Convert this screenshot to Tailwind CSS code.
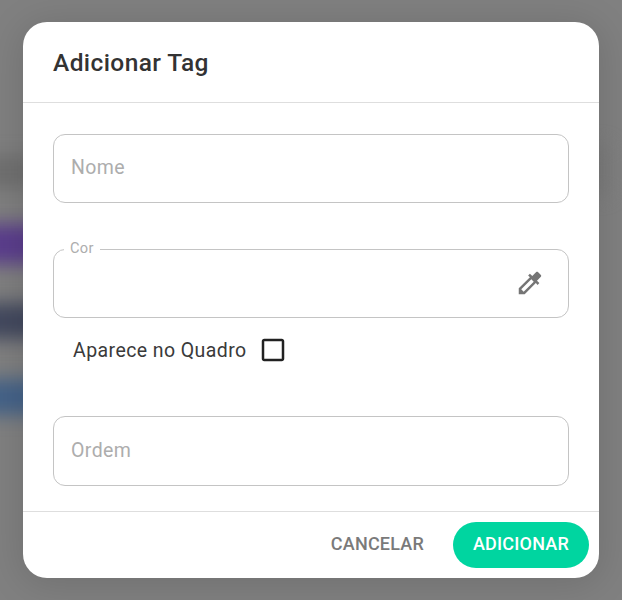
<!DOCTYPE html>
<html lang="pt-BR">
<head>
<meta charset="utf-8">
<title>Adicionar Tag</title>
<script src="https://cdn.jsdelivr.net/npm/@tailwindcss/browser@4"></script>
</head>
<body class="relative h-[600px] w-[622px] overflow-hidden bg-[#808080] font-[Roboto,sans-serif]">
  <!-- Blurred page behind the dialog -->
  <div class="absolute -left-10 top-[156px] h-[32px] w-[80px] bg-[#6f6f6f] blur-[9px]"></div>
  <div class="absolute -left-10 top-[224px] h-[40px] w-[100px] bg-[#5a3d8c] blur-[9px]"></div>
  <div class="absolute -left-10 top-[303px] h-[36px] w-[100px] bg-[#42485e] blur-[9px]"></div>
  <div class="absolute -left-10 top-[379px] h-[36px] w-[100px] bg-[#446288] blur-[9px]"></div>
  <div class="absolute left-[560px] top-[145px] h-[50px] w-[48px] bg-[#7a7a7a] blur-[9px]"></div>

  <main class="relative ml-[23px] mt-[22px] flex h-[556px] w-[576px] flex-col rounded-[24px] bg-white text-[#333333] shadow-[0_4px_36px_4px_rgba(0,0,0,0.12)]">
    <header class="flex h-[81px] shrink-0 items-center border-b border-[#dedede] px-[30px] pt-[2px]">
      <h1 class="text-[24.5px] font-medium leading-8 tracking-[0.4px]">Adicionar Tag</h1>
    </header>
    <section class="flex grow flex-col px-[30px] pt-[31px]">
      <div class="flex h-[69px] items-center rounded-[12px] border border-[#c4c4c4] px-[17px] pb-[1px] text-[19.5px] tracking-[0.4px] text-[#adadad]">Nome</div>
      <div class="relative mt-[46px] flex h-[69px] items-center justify-end rounded-[12px] border border-[#c4c4c4] pb-[2px] pr-[23px]">
        <span class="absolute -top-[12px] left-[10px] bg-white pl-[6px] pr-[6px] text-[14.6px] leading-[20px] tracking-[0.3px] text-[#adadad]">Cor</span>
        <svg class="size-[30px]" viewBox="0 0 24 24" fill="#757575"><path d="M20.71 5.63l-2.34-2.34c-.39-.39-1.02-.39-1.41 0l-3.12 3.12-1.93-1.91-1.41 1.41 1.42 1.42L3 16.25V21h4.75l8.92-8.92 1.42 1.42 1.41-1.41-1.92-1.92 3.12-3.12c.4-.4.4-1.03.01-1.42zM6.92 19L5 17.08l8.06-8.06 1.92 1.92L6.92 19z"/></svg>
      </div>
      <div class="mt-[12px] flex h-[40px] items-center pl-[20px]">
        <span class="w-[174px] whitespace-nowrap pt-[2px] text-[19.5px] tracking-[0.42px] text-[#3a3a3a]">Aparece no Quadro</span>
        <svg class="ml-[11px] size-[30px]" viewBox="0 0 24 24" fill="#212121"><path d="M19 5v14H5V5h14m0-2H5c-1.1 0-2 .9-2 2v14c0 1.1.9 2 2 2h14c1.100 0 2-.9 2-2V5c0-1.100-.9-2-2-2z"/></svg>
      </div>
      <div class="mt-[46px] flex h-[70px] items-center rounded-[12px] border border-[#c4c4c4] px-[17px] text-[19.5px] tracking-[0.4px] text-[#adadad]">Ordem</div>
    </section>
    <footer class="flex h-[67px] shrink-0 items-center justify-end border-t border-[#dedede] pr-[10px]">
      <button class="mr-[29px] pb-[3px] text-[18px] font-medium tracking-[0.2px] text-[#7a7a7a]">CANCELAR</button>
      <button class="h-[46px] w-[136px] rounded-full bg-[#00d5a0] pb-[3px] text-[18px] font-medium tracking-[0.2px] text-white">ADICIONAR</button>
    </footer>
  </main>
</body>
</html>
